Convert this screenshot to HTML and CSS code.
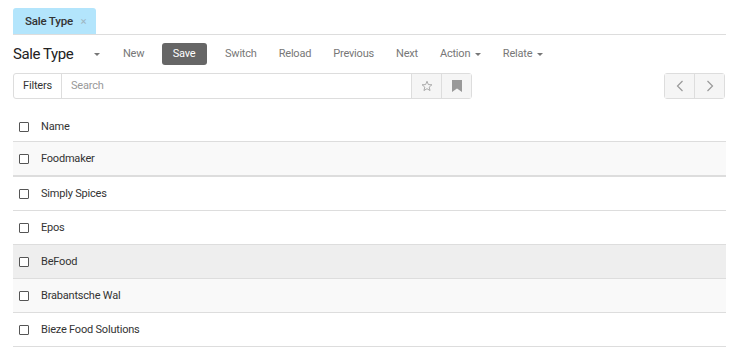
FILE: index.html
```html
<!DOCTYPE html>
<html>

<head>
  <meta charset="utf-8">
  <title>Sale Type</title>
  <link rel="stylesheet" href="styles.css">
</head>

<body>
  <div class="tabs">
    <div class="tab">Sale Type <span class="tab-close">&times;</span></div>
  </div>

  <div class="toolbar">
    <span class="title">Sale Type</span>
    <span class="title-caret"></span>
    <a class="tool">New</a>
    <a class="tool btn-save">Save</a>
    <a class="tool">Switch</a>
    <a class="tool">Reload</a>
    <a class="tool">Previous</a>
    <a class="tool">Next</a>
    <a class="tool">Action <span class="caret"></span></a>
    <a class="tool">Relate <span class="caret"></span></a>
  </div>

  <div class="filter-row">
    <div class="filter-group">
      <span class="filter-btn">Filters</span>
      <span class="search">Search</span>
      <span class="icon-btn">
        <svg width="12" height="12" viewBox="0 0 24 24"><path d="M12 2.5l2.7 6.6 7.1.5-5.4 4.6 1.7 6.9L12 17.4l-6.1 3.7 1.7-6.9-5.4-4.6 7.1-.5z" fill="none" stroke="#999" stroke-width="1.6" stroke-linejoin="round"/></svg>
      </span>
      <span class="icon-btn">
        <svg width="10" height="12" viewBox="0 0 10 12"><path d="M0 0h10v12L5 8.5 0 12z" fill="#999"/></svg>
      </span>
    </div>
    <div class="pager">
      <span class="icon-btn">
        <svg width="8" height="12" viewBox="0 0 8 12"><path d="M6.5 1L1.5 6l5 5" fill="none" stroke="#999" stroke-width="1.2"/></svg>
      </span>
      <span class="icon-btn">
        <svg width="8" height="12" viewBox="0 0 8 12"><path d="M1.5 1l5 5-5 5" fill="none" stroke="#999" stroke-width="1.2"/></svg>
      </span>
    </div>
  </div>

  <table class="list">
    <thead>
      <tr>
        <th class="sel"><span class="check"></span></th>
        <th>Name</th>
      </tr>
    </thead>
    <tbody>
      <tr class="stripe first">
        <td class="sel"><span class="check"></span></td>
        <td>Foodmaker</td>
      </tr>
      <tr>
        <td class="sel"><span class="check"></span></td>
        <td>Simply Spices</td>
      </tr>
      <tr>
        <td class="sel"><span class="check"></span></td>
        <td>Epos</td>
      </tr>
      <tr class="hover">
        <td class="sel"><span class="check"></span></td>
        <td>BeFood</td>
      </tr>
      <tr class="stripe">
        <td class="sel"><span class="check"></span></td>
        <td>Brabantsche Wal</td>
      </tr>
      <tr>
        <td class="sel"><span class="check"></span></td>
        <td>Bieze Food Solutions</td>
      </tr>
    </tbody>
  </table>
</body>

</html>
```

FILE: styles.css
```css
/* Reset and base font */
body {
  margin: 0;
  padding: 8px 10px 0 13px;
  font-family: Roboto, "Liberation Sans", Arial, sans-serif;
  font-size: 11px;
  letter-spacing: -0.2px;
  color: #333333;
  background-color: #ffffff;
}

/* Tab strip */
.tabs {
  display: flex;
  border-bottom: 1px solid #dddddd;
}

.tab {
  background-color: #b3e5fc;
  height: 26px;
  line-height: 26px;
  padding: 0 10px 0 12px;
  border-radius: 3px 3px 0 0;
  color: #333333;
  font-weight: 500;
  font-size: 11.5px;
}

.tab-close {
  color: #9fb6c2;
  margin-left: 5px;
  font-weight: 400;
}

/* Toolbar */
.toolbar {
  display: flex;
  align-items: center;
  height: 22px;
  margin-top: 8px;
}

.title {
  font-size: 15px;
  color: #222222;
  letter-spacing: -0.4px;
}

.title-caret {
  margin-left: 21px;
  margin-right: 12px;
  border-top: 3px solid #777777;
  border-left: 3px solid transparent;
  border-right: 3px solid transparent;
}

.tool {
  color: #777777;
  padding: 0 10.5px;
  line-height: 22px;
  margin-right: 1px;
}

.btn-save {
  background-color: #666666;
  color: #ffffff;
  border-radius: 3px;
  padding: 0 11px;
  margin: 0 8px 0 6px;
}

.caret {
  display: inline-block;
  vertical-align: middle;
  margin-left: 2px;
  border-top: 3px solid #777777;
  border-left: 3px solid transparent;
  border-right: 3px solid transparent;
}

/* Filter bar */
.filter-row {
  display: flex;
  justify-content: space-between;
  margin-top: 8px;
}

.filter-group,
.pager {
  display: flex;
  height: 24px;
  border: 1px solid #dddddd;
  border-radius: 3px;
}

.filter-group {
  width: 457px;
}

.filter-btn {
  width: 47px;
  line-height: 24px;
  text-align: center;
  color: #333333;
  border-right: 1px solid #dddddd;
}

.search {
  flex: 1;
  line-height: 24px;
  padding-left: 9px;
  color: #999999;
}

.icon-btn {
  width: 29px;
  display: flex;
  align-items: center;
  justify-content: center;
  background-color: #f5f5f5;
  border-left: 1px solid #dddddd;
}

.pager {
  margin-right: 1px;
}

.pager .icon-btn:first-child {
  border-left: none;
}

/* List table */
.list {
  width: 713px;
  margin-top: 11px;
  border-collapse: collapse;
}

.list th,
.list td {
  height: 33px;
  padding: 0;
  text-align: left;
  font-weight: 400;
  border-bottom: 1px solid #dddddd;
}

.list th {
  height: 29px;
  padding-top: 2px;
}

.list .sel {
  width: 28px;
  text-align: left;
  padding-left: 6px;
  box-sizing: border-box;
}

.check {
  display: inline-block;
  width: 8px;
  height: 8px;
  border: 1px solid #555555;
  border-radius: 1px;
  vertical-align: middle;
  background-color: #ffffff;
}

.list .stripe td {
  background-color: #f9f9f9;
}

.list .hover td {
  background-color: #eeeeee;
}

.list .first td {
  border-bottom: 2px solid #dddddd;
}
```
